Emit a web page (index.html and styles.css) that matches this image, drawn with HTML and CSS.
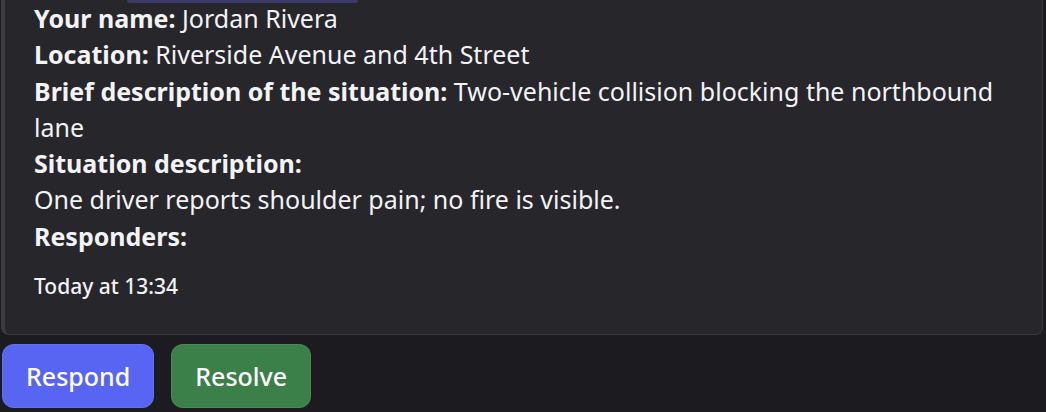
FILE: index.html
```html
<!DOCTYPE html>
<html>
<head>
  <title>Incident Report</title>
  <meta name="viewport" content="width=device-width, initial-scale=1">
  <link rel="stylesheet" href="styles.css">
</head>
<body>
  <div class="embed">
    <div class="mention-tail"></div>
    <div class="fields">
      <p><b>Your name:</b> Jordan Rivera</p>
      <p><b>Location:</b> Riverside Avenue and 4th Street</p>
      <p><b>Brief description of the situation:</b> Two-vehicle collision blocking the northbound lane</p>
      <p><b>Situation description:</b><br>One driver reports shoulder pain; no fire is visible.</p>
      <p><b>Responders:</b></p>
    </div>
    <div class="footer">Today at 13:34</div>
  </div>
  <div class="actions">
    <button class="btn btn-primary">Respond</button>
    <button class="btn btn-success">Resolve</button>
  </div>
</body>
</html>
```

FILE: styles.css
```css
body { margin:0; background:#1c1b20; font-family:'Noto Sans',sans-serif; color:#f2f3f5; }
.embed { background:#26262b; margin:0 3px 0 1px; padding:0 30px 36px 29px;
         border-left:4px solid #3c3c43; border-right:1px solid #38383f; border-bottom:1px solid #38383f;
         border-radius:0 0 8px 8px; }
.mention-tail { margin-left:93px; width:231px; height:3px; background:#3c3a6b; border-radius:0 0 4px 4px; }
.fields { font-size:25px; line-height:36.3px; margin-top:-3px; }
.fields p { margin:0; }
.fields b { font-weight:700; }
.footer { font-size:21px; font-weight:500; margin-top:20px; line-height:24px; }
.actions { display:flex; gap:17px; padding:9px 2px; }
.btn { font-family:inherit; font-size:25px; font-weight:500; color:#fff; border-radius:12px; height:64px;
       padding:0 23px; border:1px solid rgba(255,255,255,0.08); cursor:pointer; }
.btn-primary { background:#5865f2; }
.btn-success { background:#3b8049; }
```
